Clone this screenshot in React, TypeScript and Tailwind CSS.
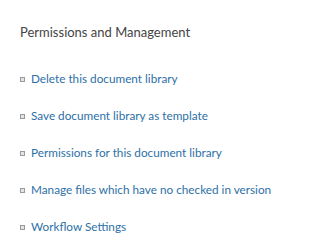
import React from "react";

const links = [
  "Delete this document library",
  "Save document library as template",
  "Permissions for this document library",
  "Manage files which have no checked in version",
  "Workflow Settings",
];

export default function App() {
  return (
    <div
      className="w-[283px] h-[240px] bg-white pl-[20px] pt-[23px] overflow-hidden"
      style={{ fontFamily: 'Lato, "Open Sans", sans-serif' }}
    >
      <h2 className="text-[13px] leading-[18px] text-[#444444] font-normal">
        Permissions and Management
      </h2>
      <ul className="mt-[29px] flex flex-col gap-[19px]">
        {links.map((l) => (
          <li key={l} className="flex items-center h-[18px]">
            <span className="w-[5px] h-[5px] border border-[#9a9a9a] bg-[#e4e4e4] mr-[6px] shrink-0" />
            <a className="text-[11.75px] leading-[18px] text-[#2d70a6] whitespace-nowrap">
              {l}
            </a>
          </li>
        ))}
      </ul>
    </div>
  );
}
